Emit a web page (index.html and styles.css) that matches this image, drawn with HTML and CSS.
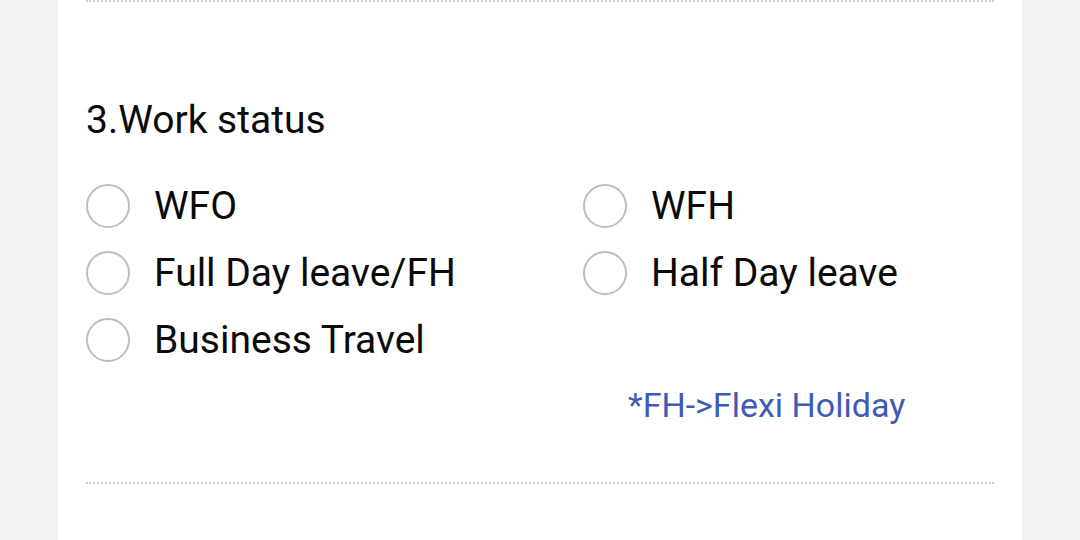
FILE: index.html
```html
<!DOCTYPE html>
<html>
<head>
<meta charset="utf-8">
<link rel="stylesheet" href="styles.css">
</head>
<body>
<div class="page">
  <div class="card">
    <div class="rule"></div>
    <div class="question">
      <div class="title">3.Work status</div>
      <div class="options">
        <div class="option"><span class="radio"></span><span class="label">WFO</span></div>
        <div class="option"><span class="radio"></span><span class="label">WFH</span></div>
        <div class="option"><span class="radio"></span><span class="label">Full Day leave/FH</span></div>
        <div class="option"><span class="radio"></span><span class="label">Half Day leave</span></div>
        <div class="option"><span class="radio"></span><span class="label">Business Travel</span></div>
      </div>
      <div class="note">*FH-&gt;Flexi Holiday</div>
    </div>
    <div class="rule"></div>
  </div>
</div>
</body>
</html>
```
FILE: styles.css
```css
html, body {
  margin: 0;
  padding: 0;
  background: #f2f2f2;
  font-family: Roboto, "Noto Sans", sans-serif;
}
.page {
  width: 1080px;
  height: 540px;
  overflow: hidden;
  display: flex;
  justify-content: center;
}
.card {
  width: 908px;
  background: #ffffff;
  padding: 0 28px;
  display: flex;
  flex-direction: column;
}
.rule {
  border-top: 2px dotted #d0d0d0;
  height: 0;
}
.question {
  padding-top: 96px;
  padding-bottom: 57px;
}
.title {
  font-size: 39px;
  line-height: 44px;
  color: #0a0a0a;
  margin-bottom: 42px;
}
.options {
  display: grid;
  grid-template-columns: 497px 1fr;
  row-gap: 23px;
}
.option {
  display: flex;
  align-items: center;
  height: 44px;
}
.radio {
  width: 40px;
  height: 40px;
  border: 2px solid #bcbec0;
  border-radius: 50%;
  flex: none;
}
.label {
  margin-left: 24px;
  font-size: 39px;
  color: #0a0a0a;
}
.note {
  margin-top: 23px;
  margin-left: 542px;
  font-size: 34px;
  line-height: 40px;
  color: #3f5bb5;
}
```
